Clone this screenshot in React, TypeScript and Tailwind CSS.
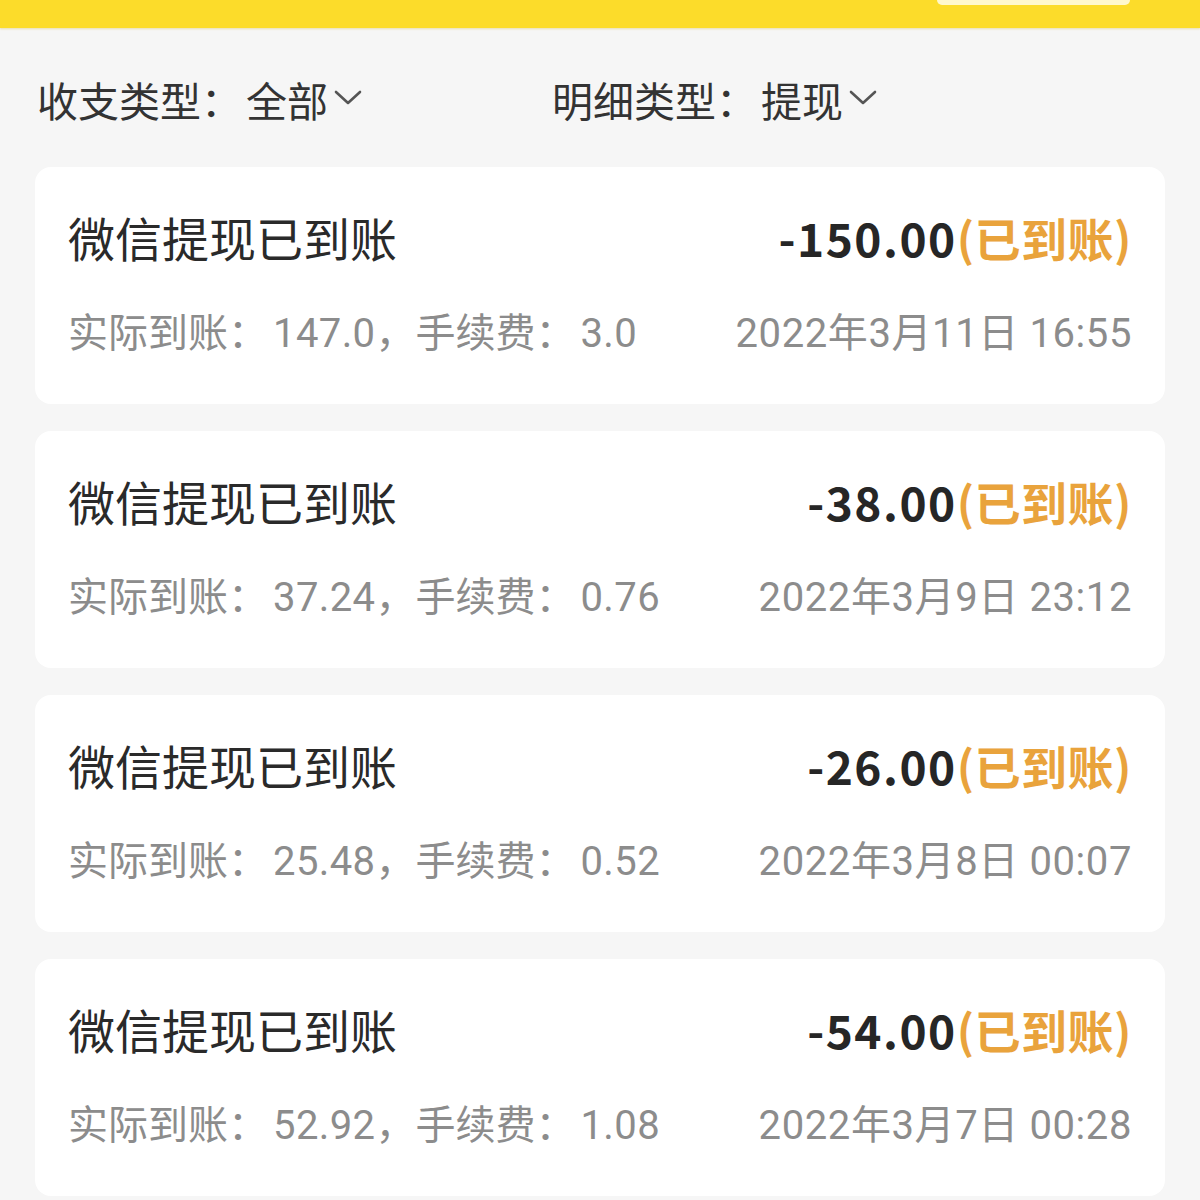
type Record = {
  amount: string;
  actual: string;
  fee: string;
  time: string;
};

const records: Record[] = [
  { amount: "-150.00", actual: "147.0", fee: "3.0", time: "2022年3月11日 16:55" },
  { amount: "-38.00", actual: "37.24", fee: "0.76", time: "2022年3月9日 23:12" },
  { amount: "-26.00", actual: "25.48", fee: "0.52", time: "2022年3月8日 00:07" },
  { amount: "-54.00", actual: "52.92", fee: "1.08", time: "2022年3月7日 00:28" },
];

const font = { fontFamily: '"Noto Sans CJK SC", "Noto Sans", sans-serif' };
const subFont = { fontFamily: 'Roboto, "Noto Sans CJK SC", sans-serif' };

function Filter({ label, value, className }: { label: string; value: string; className?: string }) {
  return (
    <div className={`flex items-center text-[41px] leading-[41px] text-[#333] ${className ?? ""}`}>
      <span>{label}：</span>
      <span className="ml-[4px]">{value}</span>
      <svg width="28" height="16" viewBox="0 0 28 16" className="ml-[6px] mt-[-4px]">
        <path d="M2 2 L14 13 L26 2" fill="none" stroke="#555" strokeWidth="2.6" strokeLinecap="round" strokeLinejoin="round" />
      </svg>
    </div>
  );
}

export default function App() {
  return (
    <div className="min-h-[1200px] w-[1200px] bg-[#f6f6f6] overflow-hidden" style={font}>
      {/* top bar */}
      <div className="h-[28px] bg-[#fcdc2a] flex justify-end pr-[70px] shadow-[0_1px_2px_rgba(200,170,0,0.3)]">
        <div className="h-[5px] w-[193px] bg-[#fff8cc] rounded-b-full" />
      </div>

      {/* filters */}
      <div className="flex items-center pl-[37px] mt-[51px]">
        <Filter label="收支类型" value="全部" className="w-[515px]" />
        <Filter label="明细类型" value="提现" />
      </div>

      {/* list */}
      <div className="mt-[47px] mx-[35px] flex flex-col gap-[27px]">
        {records.map((r, i) => (
          <div key={i} className="h-[237px] bg-white rounded-[16px] px-[33px] pt-[47px] flex flex-col">
            <div className="flex items-center justify-between h-[46px]">
              <span className="text-[47px] leading-[46px] text-[#2a2a2a]">微信提现已到账</span>
              <span className="flex items-center text-[46px] leading-[46px] font-bold">
                <span className="text-[#262626] tracking-[1.5px]">{r.amount}</span>
                <span className="text-[#e9a33c] tracking-[0.5px]">(已到账)</span>
              </span>
            </div>
            <div
              className="flex items-center justify-between h-[40px] mt-[54px] text-[40px] leading-[40px] text-[#8c8c8c]"
              style={subFont}
            >
              <span className="flex items-center">
                <span>实际到账：</span>
                <span className="ml-[5px] tracking-[0.4px]">{r.actual}</span>
                <span>，</span>
                <span>手续费：</span>
                <span className="ml-[5px] tracking-[0.4px]">{r.fee}</span>
              </span>
              <span className="tracking-[0.6px]">{r.time}</span>
            </div>
          </div>
        ))}
      </div>
    </div>
  );
}
